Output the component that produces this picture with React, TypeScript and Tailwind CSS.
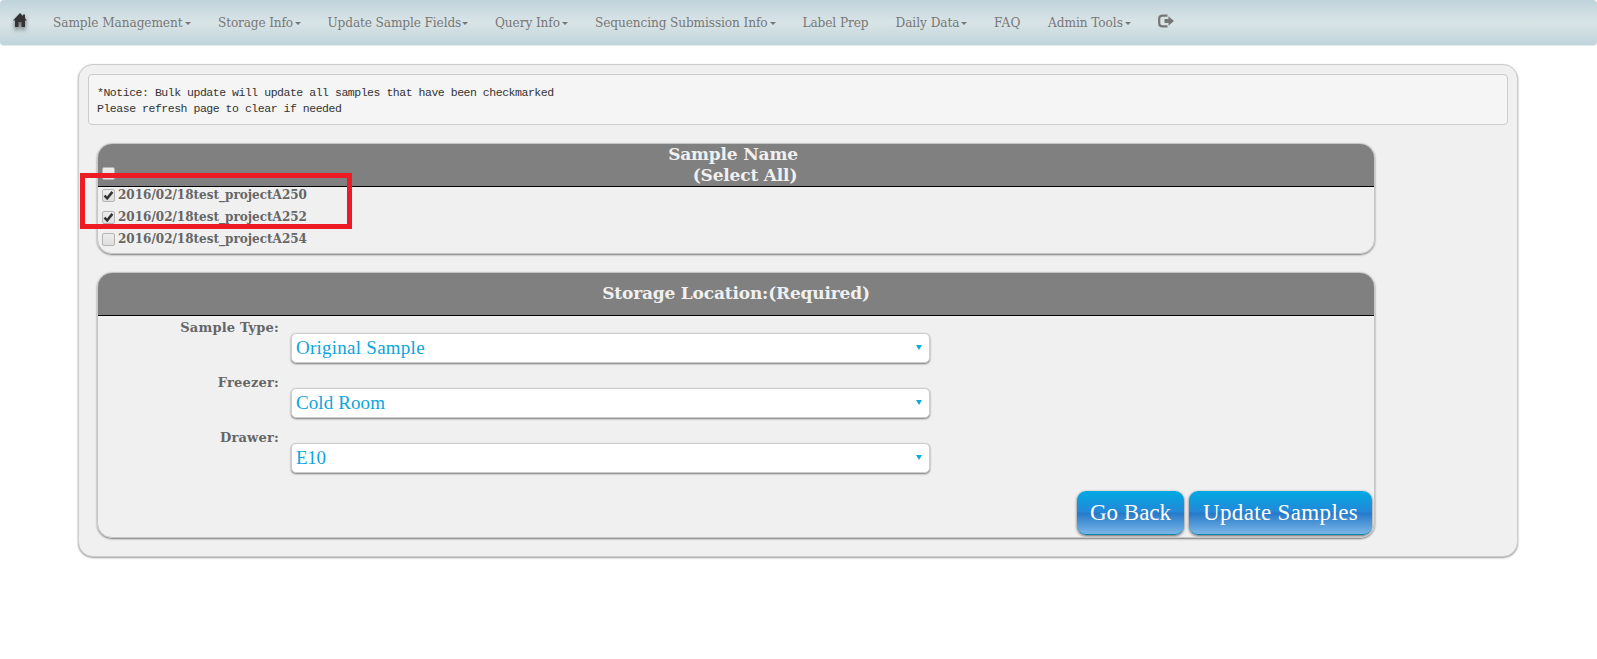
import React from "react";

const navItems = [
  { label: "Sample Management", width: "w-[130px]", spacing: "tracking-[-0.08px]", menu: true },
  { label: "Storage Info", width: "w-[74.5px]", spacing: "tracking-[-0.15px]", menu: true },
  { label: "Update Sample Fields", width: "w-[132.5px]", spacing: "tracking-[-0.12px]", menu: true },
  { label: "Query Info", width: "w-[65px]", spacing: "tracking-[-0.1px]", menu: true },
  { label: "Sequencing Submission Info", width: "w-[172.5px]", spacing: "tracking-[-0.11px]", menu: true },
  { label: "Label Prep", width: "w-[66px]", spacing: "tracking-[-0.1px]", menu: false },
  { label: "Daily Data", width: "w-[63.5px]", spacing: "tracking-[-0.05px]", menu: true },
  { label: "FAQ", width: "w-[27px]", spacing: "tracking-[0.3px]", menu: false },
  { label: "Admin Tools", width: "w-[75px]", spacing: "tracking-[-0.05px]", menu: true },
];

const samples = [
  { name: "2016/02/18test_projectA250", checked: true },
  { name: "2016/02/18test_projectA252", checked: true },
  { name: "2016/02/18test_projectA254", checked: false },
];

const fields = [
  { label: "Sample Type:", value: "Original Sample", spacing: "tracking-[0.25px]" },
  { label: "Freezer:", value: "Cold Room", spacing: "tracking-[0.1px]" },
  { label: "Drawer:", value: "E10", spacing: "tracking-[-0.3px]" },
];

function Checkbox({ checked }: { checked?: boolean }) {
  return (
    <span className="flex size-[13px] shrink-0 items-center justify-center rounded-[2px] border border-[#b4b4b4] bg-linear-to-b from-[#ededed] to-[#dedede]">
      {checked && (
        <svg viewBox="0 0 11 11" className="size-[11px]">
          <path d="M1.5 5.6 4.2 8.4 9.4 1.9" fill="none" stroke="#333" strokeWidth="2.5" />
        </svg>
      )}
    </span>
  );
}

const card =
  "w-[1278px] overflow-hidden rounded-[15px] border border-[#c6c6c6] shadow-[0_1px_2px_rgba(0,0,0,0.5)]";
const bold = "font-['DejaVu_Serif',serif] font-bold";
const button =
  "flex h-11 items-center justify-center rounded-[9px] border-b border-[#0780a8] bg-[linear-gradient(#00a9e2_0%,#2588d8_49%,#2478c8_51%,#7ab6e8_100%)] pt-0.5 text-[23px] text-white shadow-[0_1px_3px_rgba(0,0,0,0.6)] whitespace-nowrap";

export default function App() {
  return (
    <div className="h-[659px] overflow-hidden bg-white font-['Liberation_Serif',serif] text-[#666]">
      <nav className="flex h-[46px] items-start rounded-[4px] border-b border-[#e3eaec] bg-[linear-gradient(#c0d4dc,#d9e4e6_50%,#c0d4dc)] pl-[13px] font-['DejaVu_Serif_Condensed','DejaVu_Serif',serif] text-[13.5px] text-[#777]">
        <svg viewBox="0 0 14 14" className="mt-[13px] h-[14px] w-[14px] overflow-visible drop-shadow-[0_3px_2px_rgba(0,0,0,0.5)]">
          <path d="M7 0 10 3V1.5H12V5.2L14 7.5H12V14H8.5V9H5.5V14H2V7.5H0Z" fill="#333" />
        </svg>
        <ul className="ml-[26px] flex h-[45px] items-center gap-[27px]">
          {navItems.map((item) => (
            <li key={item.label} className="flex items-center">
              <span className={`${item.width} ${item.spacing} whitespace-nowrap`}>{item.label}</span>
              {item.menu && (
                <span className="ml-[2px] mt-[2px] border-x-[3px] border-t-[3px] border-x-transparent border-t-[#777]" />
              )}
            </li>
          ))}
          <li className="-mt-[4px]">
            <svg viewBox="0 0 16 14" className="h-[14px] w-4">
              <path d="M9.5 1.6H4.5Q1.2 1.6 1.2 4.5V9.5Q1.2 12.4 4.5 12.4H9.5" fill="none" stroke="#777" strokeWidth="2.2" />
              <path d="M6.5 5H10.5V2.2L16 7 10.5 11.8V9H6.5Z" fill="#777" />
            </svg>
          </li>
        </ul>
      </nav>

      <main className="relative ml-[78px] mt-[18px] h-[493px] w-[1440px] rounded-[15px] border border-[#ccc] bg-[#f0f0f0] px-[9px] pt-[9px] shadow-[0_1px_2px_rgba(0,0,0,0.4)]">
        <pre className="h-[51px] rounded-[4px] border border-[#ccc] bg-[#f5f5f5] px-[8px] pt-[10px] font-['Liberation_Mono',monospace] text-[11.5px] leading-4 tracking-[-0.47px] text-[#333]">
          {"*Notice: Bulk update will update all samples that have been checkmarked\nPlease refresh page to clear if needed"}
        </pre>

        <section className={`${card} ml-[9px] mt-[18px] h-[111px]`}>
          <header className={`${bold} relative h-[43px] border-b border-black bg-[#808080] text-center text-[17px] leading-[21px] tracking-[-0.18px] text-[#f0f0f0]`}>
            <div className="-ml-[6px]">Sample Name</div>
            <div className="ml-[18px]">(Select All)</div>
            <div className="absolute left-[4px] top-[23px]">
              <Checkbox />
            </div>
          </header>
          <ul className="-mt-[2px]">
            {samples.map((s) => (
              <li key={s.name} className={`${bold} flex h-[22px] items-center gap-[3px] pl-[4px] text-[12px]`}>
                <span className="-mt-px"><Checkbox checked={s.checked} /></span>
                <span className="-mt-[2px]">{s.name}</span>
              </li>
            ))}
          </ul>
        </section>

        <section className={`${card} mt-[18px] ml-[9px] h-[266px]`}>
          <header className={`${bold} flex h-[43px] items-center justify-center border-b border-black bg-[#808080] text-[17px] tracking-[-0.18px] text-[#f0f0f0]`}>
            <span>Storage Location:(Required)</span>
          </header>
          {fields.map((f) => (
            <div key={f.label} className="flex h-[55px] items-start">
              <div className={`${bold} w-[181px] pt-[2px] text-right text-[13px] leading-5 tracking-[0.2px]`}>{f.label}</div>
              <div className="ml-[12px] mt-[17px] flex h-[30px] w-[639px] items-center justify-between rounded-[5px] border border-[#ccc] bg-white pl-[4px] pr-[7px] text-[19px] text-[#0ca5dd] shadow-[0_1px_2px_rgba(0,0,0,0.5)]">
                <span className={f.spacing}>{f.value}</span>
                <span className="-mt-px border-x-[3px] border-t-[5px] border-x-transparent border-t-[#0cabe2]" />
              </div>
            </div>
          ))}
          <div className="mt-[10px] flex justify-end gap-[5px] pr-[2px]">
            <button className={`${button} w-[107px]`}>Go Back</button>
            <button className={`${button} w-[183px] tracking-[0.35px]`}>Update Samples</button>
          </div>
        </section>
        <div className="absolute left-px top-[108px] h-[56px] w-[272px] border-[5px] border-[#ed1c24]" />
      </main>
    </div>
  );
}
